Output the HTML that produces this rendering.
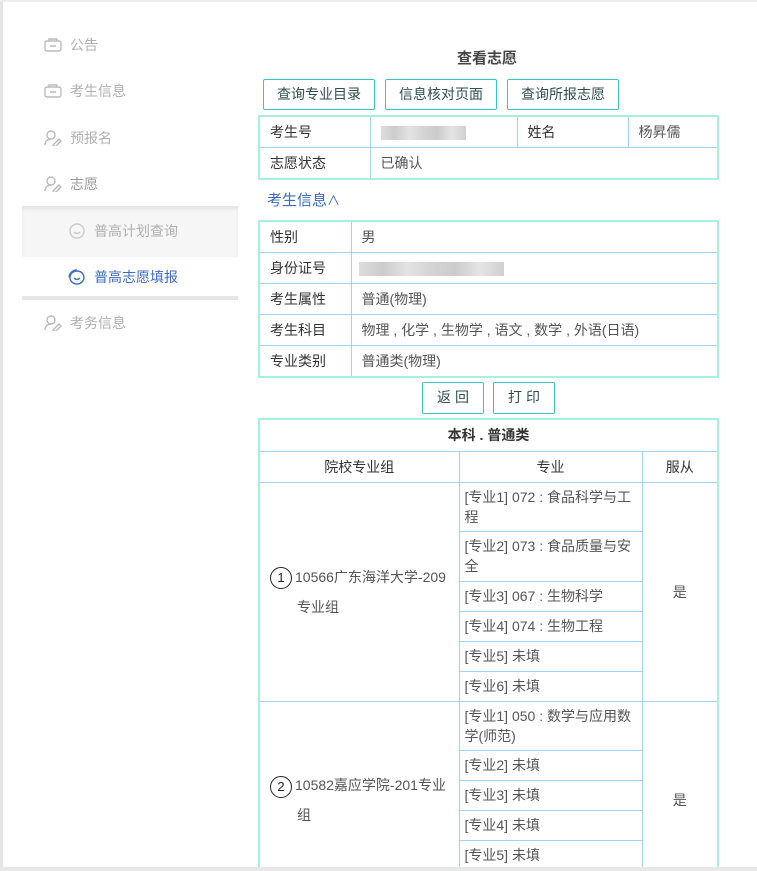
<!DOCTYPE html>
<html style="overflow:hidden"><head><meta charset="utf-8"><style>
*{margin:0;padding:0;box-sizing:border-box}
html,body{width:757px;height:871px;overflow:hidden}
body{background:#fff;position:relative;font-family:"Liberation Sans","Noto Sans CJK SC",sans-serif;font-size:14px;color:#555}
.a{position:absolute}
.nav{position:absolute;left:44px;font-size:14px;color:#b0b0b0;display:flex;align-items:center;height:20px}
.nav svg{margin-right:8px}
.btn{position:absolute;border:1.5px solid #3cc5c0;border-radius:2px;color:#2f4f4f;font-size:14px;text-align:center;background:#fff}
table{position:absolute;border-collapse:collapse;table-layout:fixed;border:2px solid #a8eee3}
td{border:1px solid #9fd4f5;padding:0 10px;vertical-align:middle;line-height:20px}
.lab{color:#333}
.blur{display:inline-block;height:14px;background:linear-gradient(90deg,#ddd,#ccc,#e3e3e3,#d4d4d4,#ccc,#e5e5e5,#d0d0d0);vertical-align:middle}
.c{text-align:center}
.m{padding:0 2px 0 5px}
.circ{display:inline-block;width:22px;height:22px;border:1px solid #222;border-radius:50%;text-align:center;line-height:20px;color:#222;font-size:13px;margin-right:3px;vertical-align:middle}
</style></head><body>
<div class="a" style="left:0;top:0;width:3px;height:871px;background:#e4e4e4"></div>
<div class="a" style="left:0;top:0;width:757px;height:2px;background:#ececec"></div>

<div class="nav" style="top:35px"><svg width="18" height="14" viewBox="0 0 18 14"><rect x="1" y="3" width="16" height="10" rx="2" fill="none" stroke="#bbb" stroke-width="1.4"/><path d="M5 3V1h8v2M6 8h6" stroke="#bbb" stroke-width="1.4" fill="none"/></svg>公告</div>
<div class="nav" style="top:81px"><svg width="18" height="14" viewBox="0 0 18 14"><rect x="1" y="3" width="16" height="10" rx="2" fill="none" stroke="#bbb" stroke-width="1.4"/><path d="M5 3V1h8v2M6 8h6" stroke="#bbb" stroke-width="1.4" fill="none"/></svg>考生信息</div>
<div class="nav" style="top:128px"><svg width="18" height="16" viewBox="0 0 18 16"><circle cx="7" cy="5" r="4" fill="none" stroke="#bbb" stroke-width="1.4"/><path d="M1 15c0-4 3-6 6-6M9 15l6-6 2 2-6 6z" stroke="#bbb" stroke-width="1.4" fill="none"/></svg>预报名</div>
<div class="nav" style="top:174px"><svg width="18" height="16" viewBox="0 0 18 16"><circle cx="7" cy="5" r="4" fill="none" stroke="#bbb" stroke-width="1.4"/><path d="M1 15c0-4 3-6 6-6M9 15l6-6 2 2-6 6z" stroke="#bbb" stroke-width="1.4" fill="none"/></svg><span style="color:#999">志愿</span></div>
<div class="a" style="left:22px;top:206px;width:216px;height:51px;background:#f6f6f6;box-shadow:inset 0 4px 6px -2px #ddd"></div>
<div class="a" style="left:22px;top:296px;width:216px;height:4px;background:#e6e6e6"></div>
<div class="nav" style="top:221px;left:68px"><svg width="18" height="16" viewBox="0 0 18 16"><circle cx="9" cy="8" r="7" fill="none" stroke="#ccc" stroke-width="1.4"/><path d="M6 9q3 3 6 0" stroke="#ccc" stroke-width="1.4" fill="none"/></svg>普高计划查询</div>
<div class="nav" style="top:267px;left:68px;color:#3d6cc0"><svg width="18" height="16" viewBox="0 0 18 16"><path d="M9 2 A7 6.5 0 1 1 8.9 2 M1 8 A8 8 0 0 1 9 1 M6 9q3 3 6 0" stroke="#3d6cc0" stroke-width="1.4" fill="none"/></svg>普高志愿填报</div>
<div class="nav" style="top:313px"><svg width="18" height="16" viewBox="0 0 18 16"><circle cx="7" cy="5" r="4" fill="none" stroke="#bbb" stroke-width="1.4"/><path d="M1 15c0-4 3-6 6-6M9 15l6-6 2 2-6 6z" stroke="#bbb" stroke-width="1.4" fill="none"/></svg>考务信息</div>

<div class="a" style="left:420px;top:47px;width:134px;text-align:center;font-size:15px;font-weight:bold;color:#444">查看志愿</div>
<div class="btn" style="left:263px;top:79px;width:112px;height:31px;line-height:28px">查询专业目录</div>
<div class="btn" style="left:385px;top:79px;width:112px;height:31px;line-height:28px">信息核对页面</div>
<div class="btn" style="left:507px;top:79px;width:112px;height:31px;line-height:28px">查询所报志愿</div>

<table style="left:258px;top:115px;width:461px;height:65px">
<colgroup><col style="width:111px"><col style="width:147px"><col style="width:111px"><col></colgroup>
<tr><td class="lab">考生号</td><td><span class="blur" style="width:85px"></span></td><td class="lab">姓名</td><td>杨昇儒</td></tr>
<tr><td class="lab">志愿状态</td><td colspan="3">已确认</td></tr>
</table>
<div class="a" style="left:267px;top:189px;color:#3d6cc0;font-size:15px">考生信息<span style="font-size:13px">∧</span></div>

<table style="left:258px;top:220px;width:461px;height:158px">
<colgroup><col style="width:92px"><col></colgroup>
<tr><td class="lab">性别</td><td>男</td></tr>
<tr><td class="lab">身份证号</td><td><span class="blur" style="width:145px;margin-left:-3px"></span></td></tr>
<tr><td class="lab">考生属性</td><td>普通(物理)</td></tr>
<tr><td class="lab">考生科目</td><td>物理 , 化学 , 生物学 , 语文 , 数学 , 外语(日语)</td></tr>
<tr><td class="lab">专业类别</td><td>普通类(物理)</td></tr>
</table>

<div class="btn" style="left:422px;top:382px;width:62px;height:32px;line-height:29px;letter-spacing:4px;text-indent:4px">返回</div>
<div class="btn" style="left:493px;top:382px;width:62px;height:32px;line-height:29px;letter-spacing:4px;text-indent:4px">打印</div>

<table style="left:258px;top:418px;width:461px;height:460px">
<colgroup><col style="width:200px"><col style="width:183px"><col></colgroup>
<tr style="height:32px"><td colspan="3" class="c" style="font-weight:bold;color:#333">本科 . 普通类</td></tr>
<tr style="height:31px"><td class="c lab">院校专业组</td><td class="c lab">专业</td><td class="c lab">服从</td></tr>
<tr style="height:49px"><td rowspan="6" style="line-height:30px;padding-left:10px"><span class="circ">1</span>10566广东海洋大学-209<br><span style="padding-left:27px">专业组</span></td><td class="m">[专业1] 072 : 食品科学与工程</td><td rowspan="6" class="c">是</td></tr>
<tr style="height:50px"><td class="m">[专业2] 073 : 食品质量与安全</td></tr>
<tr style="height:30px"><td class="m">[专业3] 067 : 生物科学</td></tr>
<tr style="height:30px"><td class="m">[专业4] 074 : 生物工程</td></tr>
<tr style="height:30px"><td class="m">[专业5] 未填</td></tr>
<tr style="height:30px"><td class="m">[专业6] 未填</td></tr>
<tr style="height:49px"><td rowspan="6" style="line-height:30px;padding-left:10px"><span class="circ">2</span>10582嘉应学院-201专业<br><span style="padding-left:27px">组</span></td><td class="m">[专业1] 050 : 数学与应用数学(师范)</td><td rowspan="6" class="c">是</td></tr>
<tr style="height:30px"><td class="m">[专业2] 未填</td></tr>
<tr style="height:30px"><td class="m">[专业3] 未填</td></tr>
<tr style="height:30px"><td class="m">[专业4] 未填</td></tr>
<tr style="height:30px"><td class="m">[专业5] 未填</td></tr>
<tr style="height:30px"><td class="m">[专业6] 未填</td></tr>
</table>
<div class="a" style="left:0;top:867px;width:757px;height:4px;background:#e8e8e8"></div>
</body></html>
